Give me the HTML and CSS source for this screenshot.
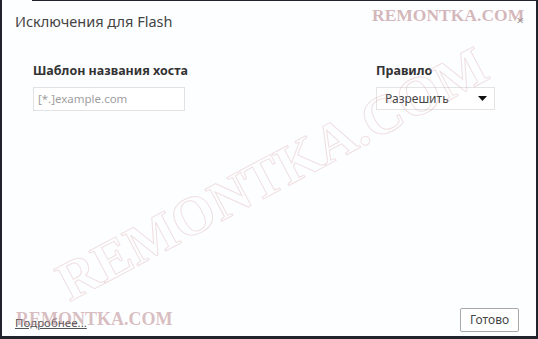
FILE: index.html
```html
<!DOCTYPE html>
<html lang="ru">
<head>
<meta charset="utf-8">
<title>Исключения для Flash</title>
<link rel="stylesheet" href="styles.css">
</head>
<body>
<div class="dialog">
  <div class="topline"></div>
  <div class="header">
    <h1 class="title">Исключения для Flash</h1>
    <span class="close">×</span>
  </div>
  <div class="form">
    <div class="col host">
      <div class="label">Шаблон названия хоста</div>
      <div class="input">[*.]example.com</div>
    </div>
    <div class="col rule">
      <div class="label">Правило</div>
      <div class="select">
        <span>Разрешить</span>
        <svg class="arrow" width="9" height="5" viewBox="0 0 9 5"><path d="M0 0H9L4.5 5Z" fill="#111"/></svg>
      </div>
    </div>
  </div>
  <div class="footer">
    <a class="more" href="#">Подробнее...</a>
    <span class="done">Готово</span>
  </div>
  <div class="wm wm-top">REMONTKA.COM</div>
  <div class="wm wm-big">REMONTKA.COM</div>
  <div class="wm wm-bottom">REMONTKA.COM</div>
</div>
</body>
</html>
```
FILE: styles.css
```css
html, body {
  margin: 0;
  padding: 0;
  background: #fff;
}
body {
  font-family: "Noto Sans", "Open Sans", sans-serif;
  color: #333;
}
.dialog {
  position: relative;
  width: 538px;
  height: 339px;
  box-sizing: border-box;
  border-left: 2px solid #23232d;
  border-right: 2px solid #23232d;
  border-bottom: 3px solid #23232d;
  background: #fdfeff;
  display: flex;
  flex-direction: column;
  overflow: hidden;
}
.topline {
  position: absolute;
  top: 0;
  left: 30px;
  right: 0;
  height: 1px;
  background: #23232d;
}
.header {
  display: flex;
  justify-content: space-between;
  align-items: flex-start;
  padding: 11px 12px 0 13px;
}
.title {
  margin: 0;
  font-size: 14.5px;
  font-weight: 400;
  line-height: 20px;
  color: #444;
}
.close {
  font-size: 13px;
  line-height: 13px;
  color: #999;
  margin-top: 3px;
}
.form {
  display: flex;
  padding: 31px 0 0 31px;
}
.col {
  display: flex;
  flex-direction: column;
}
.host {
  width: 343px;
}
.label {
  font-size: 12.5px;
  font-weight: 700;
  line-height: 18px;
  color: #333;
  margin-bottom: 7px;
}
.input {
  width: 152px;
  height: 24px;
  box-sizing: border-box;
  border: 1px solid #e2e2e2;
  font-size: 11.5px;
  line-height: 22px;
  padding-left: 4px;
  color: #a0a0a0;
  background: #fff;
}
.select {
  width: 119px;
  height: 23px;
  box-sizing: border-box;
  border: 1px solid #e4e4e4;
  display: flex;
  align-items: center;
  justify-content: space-between;
  padding: 0 7px 0 8px;
  font-size: 12px;
  color: #444;
  background: #fff;
}
.arrow {
  display: block;
}
.footer {
  margin-top: auto;
  display: flex;
  align-items: center;
  justify-content: space-between;
  padding: 0 17px 4px 13px;
}
.more {
  font-size: 11.5px;
  color: #555;
  text-decoration: underline;
  margin-top: 4px;
}
.done {
  width: 59px;
  height: 24px;
  box-sizing: border-box;
  border: 1px solid #a8a8a8;
  border-radius: 2px;
  font-size: 12px;
  line-height: 22px;
  text-align: center;
  color: #444;
  background: #fff;
}
.wm {
  position: absolute;
  font-family: "Liberation Serif", serif;
  font-weight: 700;
  white-space: nowrap;
  pointer-events: none;
}
.wm-top {
  top: 5px;
  left: 370px;
  font-size: 17.5px;
  color: rgba(185, 135, 140, 0.6);
}
.wm-bottom {
  top: 309px;
  left: 14px;
  font-size: 18px;
  color: rgba(185, 135, 140, 0.55);
}
.wm-big {
  left: 20px;
  top: 146px;
  width: 500px;
  text-align: center;
  font-size: 55px;
  line-height: 55px;
  color: transparent;
  -webkit-text-stroke: 1px rgba(215, 165, 170, 0.35);
  transform: rotate(-28deg);
}
```
